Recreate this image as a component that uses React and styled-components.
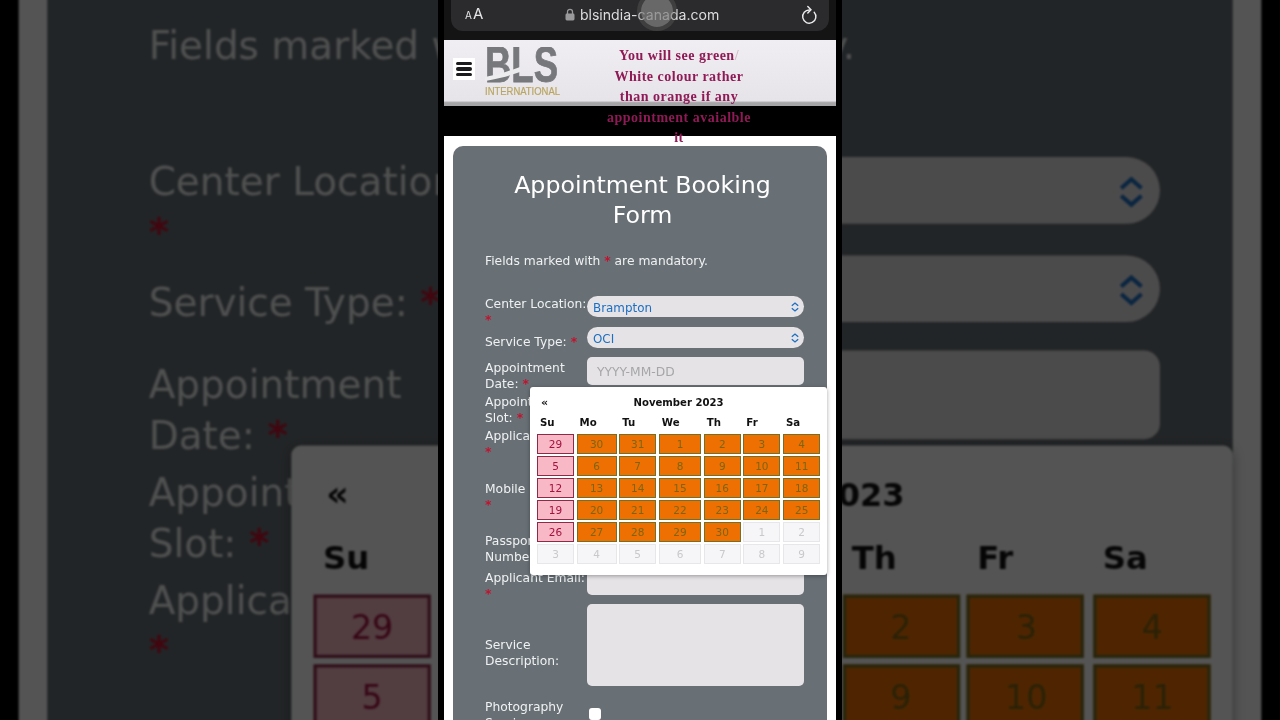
import React from "react";
import styled, { createGlobalStyle } from "styled-components";

const GlobalStyle = createGlobalStyle`
  html, body {
    margin: 0;
    padding: 0;
    background: #000;
  }
`;

const weekdays = ["Su", "Mo", "Tu", "We", "Th", "Fr", "Sa"];
const monthDays = [
  29, 30, 31, 1, 2, 3, 4,
  5, 6, 7, 8, 9, 10, 11,
  12, 13, 14, 15, 16, 17, 18,
  19, 20, 21, 22, 23, 24, 25,
  26, 27, 28, 29, 30, 1, 2,
  3, 4, 5, 6, 7, 8, 9,
];

const dayKind = (index) => {
  if (index >= 33) return "off";
  if (index % 7 === 0) return "sunday";
  return "open";
};

const dayColors = {
  sunday: { bg: "#f8b8c6", border: "#8c2a48", text: "#a3123f" },
  open: { bg: "#ee7003", border: "#727026", text: "#7c6512" },
  off: { bg: "#f6f5f7", border: "#e7e6e8", text: "#c9c8ca" },
};

const Chevrons = () => (
  <svg width="8" height="10" viewBox="0 0 8 10" fill="none" stroke="#1c6fc2" strokeWidth="1.3">
    <path d="M0.8 3.8 L4 1 L7.2 3.8" />
    <path d="M0.8 6.2 L4 9 L7.2 6.2" />
  </svg>
);

const LockIcon = () => (
  <svg width="10" height="13" viewBox="0 0 10 13" fill="none">
    <path d="M2.5 6 V3.8 a2.5 2.5 0 0 1 5 0 V6" stroke="#99999b" strokeWidth="1.3" />
    <rect x="0.5" y="5.5" width="9" height="7" rx="1.4" fill="#99999b" />
  </svg>
);

const ReloadIcon = () => (
  <svg width="18" height="20" viewBox="0 0 18 20" fill="none" stroke="#ececee" strokeWidth="1.4" strokeLinecap="round">
    <path d="M13.2 7.2 A6.6 6.6 0 1 1 8.6 5" />
    <path d="M6.8 1.4 L10 4.8 L6.8 8" />
  </svg>
);

const Logo = () => (
  <svg width="76" height="52" viewBox="0 0 76 52">
    <text x="0" y="35" fontFamily="'Liberation Sans', sans-serif" fontWeight="700" fontSize="50" fill="#76787b" stroke="#76787b" strokeWidth="0.8" textLength="73" lengthAdjust="spacingAndGlyphs">
      BLS
    </text>
    <path d="M0 30 C12 28 24 24 35 20 L35 25 C24 29 12 32 0 34 Z" fill="#ecebee" />
    <text x="0" y="48" fontFamily="'Liberation Sans', sans-serif" fontSize="10.4" fill="#b9a662" stroke="#b9a662" strokeWidth="0.2" textLength="75" lengthAdjust="spacingAndGlyphs">
      INTERNATIONAL
    </text>
  </svg>
);

const Calendar = () => (
  <CalendarPopup>
    <CalendarHead>
      <PrevArrow>«</PrevArrow>
      November 2023
    </CalendarHead>
    <DayGrid>
      {weekdays.map((day) => (
        <Weekday key={day}>{day}</Weekday>
      ))}
      {monthDays.map((day, index) => (
        <Day key={index} $kind={dayKind(index)}>
          {day}
        </Day>
      ))}
    </DayGrid>
  </CalendarPopup>
);

const Required = () => <Star>*</Star>;

const Screen = () => (
  <Phone>
    <BrowserBar>
      <UrlBar>
        <TextSize>
          <small>A</small>A
        </TextSize>
        <Address>
          <LockIcon />
          blsindia-canada.com
        </Address>
        <ReloadIcon />
        <TouchDot />
      </UrlBar>
    </BrowserBar>
    <Page>
      <SiteHeader>
        <MenuButton>
          <span />
          <span />
          <span />
        </MenuButton>
        <LogoSlot>
          <Logo />
        </LogoSlot>
        <Caption>
          <span>
            You will see green<Slash>/</Slash>
          </span>
          <span>White colour rather</span>
          <span>than orange if any</span>
          <span>appointment avaialble</span>
          <span>it</span>
        </Caption>
      </SiteHeader>
      <HeaderGap />
      <PageBody>
        <FormCard>
          <Title>Appointment Booking Form</Title>
          <Notice>
            Fields marked with <Required /> are mandatory.
          </Notice>

          <Row $height={31}>
            <Label>
              Center Location: <Required />
            </Label>
            <Select>
              Brampton
              <Chevrons />
            </Select>
          </Row>
          <Row $height={30}>
            <Label $top={7}>
              Service Type: <Required />
            </Label>
            <Select>
              OCI
              <Chevrons />
            </Select>
          </Row>
          <Row $height={34}>
            <Label $top={3}>
              Appointment Date: <Required />
            </Label>
            <Input $height={28}>YYYY-MM-DD</Input>
          </Row>
          <Row $height={34}>
            <Label $top={3}>
              Appointment Slot: <Required />
            </Label>
            <Input $height={28} />
          </Row>
          <Row $height={53}>
            <Label $top={3}>
              Applicant Name: <Required />
            </Label>
            <Input $height={28} />
          </Row>
          <Row $height={52}>
            <Label $top={3}>
              Mobile Number: <Required />
            </Label>
            <Input $height={28} />
          </Row>
          <Row $height={37}>
            <Label $top={3}>
              Passport Number: <Required />
            </Label>
            <Input $height={28} />
          </Row>
          <Row $height={37}>
            <Label $top={3}>
              Applicant Email: <Required />
            </Label>
            <Input $height={28} />
          </Row>
          <Row $height={92}>
            <Label $top={33}>Service Description:</Label>
            <Input $height={82} />
          </Row>
          <Row $height={60}>
            <Label $top={3}>Photography Service:</Label>
            <CheckBox />
          </Row>

          <Calendar />
        </FormCard>
      </PageBody>
    </Page>
  </Phone>
);

const App = () => (
  <Stage>
    <GlobalStyle />
    <Backdrop aria-hidden="true">
      <Screen />
    </Backdrop>
    <Foreground>
      <Screen />
    </Foreground>
  </Stage>
);

const Stage = styled.div`
  position: relative;
  width: 1280px;
  height: 720px;
  overflow: hidden;
  background: #000;
`;

/* same video, blown up and dimmed behind the portrait frame */
const Backdrop = styled.div`
  position: absolute;
  inset: 0;
  display: flex;
  justify-content: center;
  transform: scale(3.17);
  filter: brightness(0.33) blur(0.4px);
`;

const Foreground = styled.div`
  position: relative;
  display: flex;
  justify-content: center;
  height: 720px;
  filter: blur(0.35px);
`;

const Phone = styled.div`
  width: 404px;
  height: 720px;
  padding: 0 6px;
  box-sizing: border-box;
  background: #000;
  overflow: hidden;
  font-family: "DejaVu Sans", sans-serif;
`;

const BrowserBar = styled.div`
  height: 40px;
  padding: 0 7px;
  box-sizing: border-box;
  background: #141415;
`;

const UrlBar = styled.div`
  position: relative;
  height: 31px;
  padding: 0 10px 2px 14px;
  box-sizing: border-box;
  display: flex;
  align-items: center;
  justify-content: space-between;
  border-radius: 0 0 12px 12px;
  background: #2b2b2d;
  color: #e6e6e8;
`;

const TextSize = styled.div`
  font-family: Inter, sans-serif;
  font-size: 15px;
  line-height: 16px;

  small {
    font-size: 10px;
    margin-right: 1px;
  }
`;

const Address = styled.div`
  display: flex;
  align-items: center;
  gap: 5px;
  font-family: Inter, sans-serif;
  font-size: 14.1px;
  color: #dcdcde;
`;

const TouchDot = styled.div`
  position: absolute;
  left: 190px;
  top: -5px;
  width: 32px;
  height: 32px;
  border-radius: 50%;
  background: rgba(128, 128, 128, 0.72);
  box-shadow: 0 0 0 4px rgba(110, 110, 110, 0.3);
`;

const Page = styled.div`
  background: #fff;
  height: 680px;
`;

const SiteHeader = styled.div`
  position: relative;
  height: 66px;
  box-sizing: border-box;
  padding-left: 9px;
  display: flex;
  align-items: flex-start;
  background: linear-gradient(#f0eef2 0%, #e6e4e8 92%, #a5a5a7 95%, #a5a5a7 100%);
`;

const MenuButton = styled.div`
  width: 22px;
  height: 22px;
  margin-top: 18px;
  display: flex;
  flex-direction: column;
  justify-content: center;
  align-items: center;
  gap: 2.6px;
  background: #fff;

  span {
    width: 16px;
    height: 3.2px;
    border-radius: 2px;
    background: #1b1b1d;
  }
`;

const LogoSlot = styled.div`
  width: 76px;
  margin: 7px 0 0 10px;
`;

const Caption = styled.div`
  position: absolute;
  left: 155px;
  top: 6px;
  width: 160px;
  display: flex;
  flex-direction: column;
  align-items: center;
  font-family: "Liberation Serif", serif;
  font-weight: 700;
  font-size: 14px;
  line-height: 20.5px;
  letter-spacing: 0.5px;
  white-space: nowrap;
  color: #8f1a56;
`;

const Slash = styled.span`
  opacity: 0.25;
`;

const HeaderGap = styled.div`
  height: 30px;
  background: #000;
`;

const PageBody = styled.div`
  padding: 10px 9px 0;
`;

const FormCard = styled.div`
  position: relative;
  padding: 24px 23px 0 32px;
  border-radius: 10px 10px 0 0;
  background: #687076;
  color: #eff1f2;
  font-size: 12.3px;
  line-height: 16px;
`;

const Title = styled.h1`
  margin: 0 17px 0 13px;
  font-size: 23.7px;
  line-height: 30px;
  font-weight: 400;
  text-align: center;
  color: #fff;
`;

const Notice = styled.p`
  margin: 23px 0 27px;
  line-height: 16px;
`;

const Star = styled.span`
  color: #c4122e;
  font-weight: 700;
`;

const Row = styled.div`
  display: grid;
  grid-template-columns: 102px 217px;
  align-items: start;
  height: ${(p) => p.$height}px;
`;

const Label = styled.div`
  padding-top: ${(p) => p.$top || 0}px;
  margin-right: -5px;
`;

const Select = styled.div`
  height: 21px;
  padding: 2px 5px 0 6px;
  box-sizing: border-box;
  display: flex;
  align-items: center;
  justify-content: space-between;
  border-radius: 11px;
  background: #e5e3e6;
  color: #1c6fc2;
  font-size: 11.9px;

  svg {
    margin-top: -2px;
  }
`;

const Input = styled.div`
  height: ${(p) => p.$height}px;
  padding: 7px 10px;
  box-sizing: border-box;
  border-radius: 5px;
  background: #e5e3e6;
  color: #a6a6a8;
`;

const CheckBox = styled.div`
  width: 12px;
  height: 12px;
  margin: 12px 0 0 2px;
  border-radius: 3px;
  background: #fff;
`;

/* datepicker popup, sits over the form fields */
const CalendarPopup = styled.div`
  position: absolute;
  left: 77px;
  top: 241px;
  width: 297px;
  height: 188px;
  padding: 7px 7px 0;
  box-sizing: border-box;
  border-radius: 3px;
  background: #fff;
  box-shadow: 0 1px 4px rgba(0, 0, 0, 0.35);
  color: #111;
`;

const CalendarHead = styled.div`
  position: relative;
  height: 18px;
  text-align: center;
  font-size: 10.1px;
  line-height: 18px;
  font-weight: 700;
`;

const PrevArrow = styled.span`
  position: absolute;
  left: 4px;
  top: 0;
  font-size: 11px;
`;

const DayGrid = styled.div`
  display: grid;
  grid-template-columns: 37px 40px 37px 42.4px 37px 37px 37.4px;
  grid-auto-rows: 20px;
  column-gap: 2.6px;
  row-gap: 2px;
`;

const Weekday = styled.div`
  padding: 1px 0 0 3px;
  font-size: 10.2px;
  line-height: 20px;
  font-weight: 700;
  height: 19px;
`;

const Day = styled.div`
  box-sizing: border-box;
  border: 1px solid ${(p) => dayColors[p.$kind].border};
  background: ${(p) => dayColors[p.$kind].bg};
  color: ${(p) => dayColors[p.$kind].text};
  font-size: 10.5px;
  line-height: 18px;
  text-align: center;
`;

export default App;
